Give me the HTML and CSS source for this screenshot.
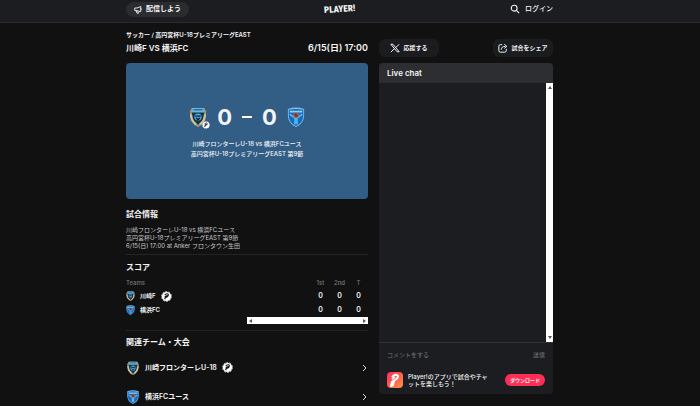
FILE: index.html
```html
<!DOCTYPE html>
<html lang="ja">
<head>
<meta charset="utf-8">
<title>川崎F VS 横浜FC | PLAYER!</title>
<link rel="stylesheet" href="styles.css">
</head>
<body>
<svg class="defs" aria-hidden="true">
  <symbol id="frontale" viewBox="0 0 20 22">
    <path d="M3 1h14l2 4-1 10-4 5-4 2-4-2-4-5L1 5z" fill="#a99b7c"/>
    <path d="M4 2h12l1 4-2 9-5 5-5-5-2-9z" fill="#173448"/>
    <path d="M4 1h12l1 5H3z" fill="#67b9e4"/>
    <path d="M5 3h10" stroke="#163d5c" stroke-width="1"/>
    <circle cx="10" cy="11" r="4" fill="#4da9d8"/>
    <path d="M7 10h6M8 12l2 2 2-2" stroke="#10212e" stroke-width="1.5" fill="none"/>
    <path d="M2 8c0 6 3 9 6 11M18 8c0 6-3 9-6 11" stroke="#d5c49d" stroke-width="2" fill="none"/>
  </symbol>
  <symbol id="yokohama" viewBox="0 0 20 22">
    <path d="M1 2q9-3 18 0v7q0 9-9 13Q1 18 1 9z" fill="#76bff0"/>
    <path d="M2 3q8-2 16 0v6q0 8-8 12-8-4-8-12z" fill="#1769ba"/>
    <path d="M3 4h14v2H3z" fill="#8fd0f5"/>
    <path d="M3 8l6 4v7M17 8l-6 4v7" stroke="#58b2ee" stroke-width="2" fill="none"/>
    <circle cx="10" cy="9" r="3" fill="#b65a3b"/>
    <path d="M8 8l4 2M10 7v4" stroke="#422e3d" stroke-width="1"/>
  </symbol>
  <symbol id="verified" viewBox="0 0 12 12">
    <circle cx="6" cy="6" r="5" fill="#fff"/>
    <circle cx="6" cy="6" r="5.300" fill="none" stroke="#fff" stroke-width="1" stroke-dasharray="2 1.300"/>
    <path d="M4 9l1-3M4 4q4-2 4 0t-3 3M4 6l3-1" stroke="#171719" stroke-width="1.300" fill="none"/>
  </symbol>
</svg>
<header class="topbar">
  <div class="container topbar-row">
    <button class="pill broadcast">
      <svg class="icon-small" viewBox="0 0 12 12" fill="none" stroke="currentColor" stroke-width="1.200"><path d="M1 4h3l5-2v7L4 7.500H1zM3 8l1 3h2L5 8M9 4.500q2 1 0 2"/></svg>配信しよう
    </button>
    <a class="logo" href="#">PLAYER!</a>
    <a class="login" href="#"><svg class="icon" viewBox="0 0 12 12" fill="none" stroke="currentColor" stroke-width="1.300"><circle cx="5" cy="5" r="3.500"/><path d="M8 8l3 3"/></svg>ログイン</a>
  </div>
</header>
<main class="container columns">
  <div class="match">
    <p class="crumbs">サッカー / 高円宮杯U-18プレミアリーグEAST</p>
    <div class="title-row"><h1>川崎F VS 横浜FC</h1><time>6/15(日) 17:00</time></div>
    <section class="board">
      <div class="score">
        <span class="crest"><svg class="crest-large"><use href="#frontale"/></svg><svg class="crest-badge"><use href="#verified"/></svg></span>
        <span class="points">0</span><span class="dash"></span><span class="points">0</span>
        <svg class="crest-large"><use href="#yokohama"/></svg>
      </div>
      <p>川崎フロンターレU-18 vs 横浜FCユース<br>高円宮杯U-18プレミアリーグEAST 第9節</p>
    </section>
    <section class="info">
      <h2>試合情報</h2>
      <p>川崎フロンターレU-18 vs 横浜FCユース<br>高円宮杯U-18プレミアリーグEAST 第9節<br>6/15(日) 17:00 at Anker フロンタウン生田</p>
    </section>
    <section class="scores">
      <h2>スコア</h2>
      <table>
        <thead><tr><th class="team-col">Teams</th><th>1st</th><th>2nd</th><th>T</th></tr></thead>
        <tbody>
          <tr><td class="team-col"><span class="team"><svg class="crest-tiny"><use href="#frontale"/></svg>川崎F<svg class="verified"><use href="#verified"/></svg></span></td><td>0</td><td>0</td><td>0</td></tr>
          <tr><td class="team-col"><span class="team"><svg class="crest-tiny"><use href="#yokohama"/></svg>横浜FC</span></td><td>0</td><td>0</td><td>0</td></tr>
        </tbody>
      </table>
      <div class="hscroll"><i class="arrow left"></i><i class="arrow right"></i></div>
    </section>
    <section class="related">
      <h2>関連チーム・大会</h2>
      <a class="related-row" href="#"><svg class="crest-small"><use href="#frontale"/></svg>川崎フロンターレU-18<svg class="verified"><use href="#verified"/></svg><svg class="chevron" viewBox="0 0 6 8"><path d="M1 1l3 3-3 3"/></svg></a>
      <a class="related-row" href="#"><svg class="crest-small"><use href="#yokohama"/></svg>横浜FCユース<svg class="chevron" viewBox="0 0 6 8"><path d="M1 1l3 3-3 3"/></svg></a>
    </section>
  </div>
  <aside class="side">
    <div class="actions">
      <button class="action cheer"><svg class="icon" viewBox="0 0 12 12" fill="none" stroke="currentColor"><path d="M1 1.500h2.500l7.500 9H8.500zM11 1.500L7 5.500M5 7l-4 4" stroke-width="1.200"/></svg>応援する</button>
      <button class="action share"><svg class="icon" viewBox="0 0 12 12" fill="none" stroke="currentColor" stroke-width="1.200"><path d="M5 2H3Q1 2 1 4v5q0 2 2 2h5q2 0 2-2V7M4 8q0-4 5-4M7.500 1.500L10.500 4 7.500 6.500"/></svg>試合をシェア</button>
    </div>
    <section class="chat">
      <h2>Live chat</h2>
      <div class="messages"><div class="vscroll"><i class="arrow up"></i><i class="arrow down"></i></div></div>
      <form class="compose"><input type="text" aria-label="コメント" placeholder="コメントをする"><button type="button">送信</button></form>
      <div class="promo">
        <svg class="app" viewBox="0 0 16 16"><defs><linearGradient id="glow" x1="0" y1="0" x2="1" y2="1"><stop offset="0" stop-color="#ff2862"/><stop offset="1" stop-color="#ff963f"/></linearGradient></defs><rect width="16" height="16" rx="4" fill="url(#glow)"/><path d="M5 5q4-4 6-1 0 3-5 5M5 7l3-2M5 10l2-1-1 4-2 1z" stroke="#fff" stroke-width="2" fill="none" stroke-linejoin="round"/></svg>
        <p>Player!のアプリで試合やチャットを楽しもう！</p>
        <a class="download" href="#">ダウンロード</a>
      </div>
    </section>
  </aside>
</main>
</body>
</html>
```
FILE: styles.css
```css
* { box-sizing: border-box; }
body {
  margin: 0;
  background: #111112;
  color: #f4f4f5;
  font-family: Inter, "Noto Sans CJK JP", sans-serif;
  font-size: 7px;
  line-height: 8px;
  overflow: hidden;
}
h1, h2, p { margin: 0; }
a { color: inherit; text-decoration: none; }
button, input { font: inherit; color: inherit; border: 0; margin: 0; padding: 0; background: none; }
svg { flex: none; display: block; }
.defs { position: absolute; width: 0; height: 0; }
.container { width: 61%; margin-left: 18%; }
.topbar { background: #1c1d20; border-bottom: 1px solid #292a2d; }
.topbar-row { display: grid; grid-template-columns: 1fr auto 1fr; align-items: center; height: 22px; padding-bottom: 4px; }
.pill { display: flex; align-items: center; gap: 3px; justify-self: start; height: 15px; padding: 0 8px; border-radius: 8px; background: #2b2c2f; font-weight: 700; }
.icon { width: 10px; height: 10px; }
.icon-small { width: 9px; height: 9px; }
.logo { font-family: "Roboto Condensed", Roboto, sans-serif; font-size: 9px; line-height: 14px; font-weight: 900; transform: rotate(-4deg); }
.login { display: flex; align-items: center; gap: 5px; justify-self: end; font-weight: 500; }
.columns { display: grid; grid-template-columns: 242fr 174fr; gap: 11px; align-items: start; }
.crumbs { margin-top: 8px; font-size: 6px; font-weight: 600; }
.title-row { display: flex; justify-content: space-between; align-items: center; margin-top: 3px; font-size: 9px; line-height: 12px; font-weight: 600; }
h1 { font-size: 8px; font-weight: 600; }
.board { margin-top: 9px; padding: 40px 0; border-radius: 4px; background: #325e85; text-align: center; }
.score { display: flex; justify-content: center; align-items: center; gap: 10px; height: 28px; }
.crest { position: relative; }
.crest-large { width: 18px; height: 20px; }
.crest-badge { position: absolute; right: -3px; bottom: -2px; width: 8px; height: 8px; }
.points { font-size: 22px; line-height: 28px; font-weight: 700; }
.dash { width: 10px; height: 2px; background: #fff; }
.board p { margin-top: 8px; font-size: 6px; line-height: 10px; font-weight: 500; }
h2 { font-size: 8px; line-height: 12px; font-weight: 700; }
.info { padding: 9px 0 4px; border-bottom: 1px solid #242426; }
.info p { margin-top: 6px; font-size: 6px; color: #c9c9cc; }
.scores { padding: 6px 0; border-bottom: 1px solid #242426; }
table { width: 100%; margin-top: 4px; border-collapse: collapse; table-layout: fixed; }
th, td { width: 19px; padding: 0; text-align: center; font-weight: 600; }
th { height: 12px; color: #77777b; font-weight: 500; font-size: 6px; }
td { height: 14px; }
.team-col { width: auto; text-align: left; }
.team { display: flex; align-items: center; gap: 5px; font-size: 6px; }
.crest-tiny { width: 9px; height: 10px; }
.verified { width: 11px; height: 11px; }
.hscroll { display: flex; justify-content: space-between; align-items: center; width: 50%; height: 7px; margin-left: auto; padding: 0 2px; background: #fff; }
.arrow { border: 2px solid transparent; }
.left { border-right: 3px solid #555; border-left-width: 0; }
.right { border-left: 3px solid #555; border-right-width: 0; }
.up { border-bottom: 3px solid #555; border-top-width: 0; }
.down { border-top: 3px solid #555; border-bottom-width: 0; }
.related { padding-top: 5px; }
.related-row { display: flex; align-items: center; gap: 5px; height: 29px; font-weight: 600; }
.related h2 + .related-row { margin-top: 5px; }
.crest-small { width: 14px; height: 14px; }
.chevron { width: 6px; height: 8px; margin-left: auto; fill: none; stroke: #ddd; }
.actions { display: flex; justify-content: space-between; margin-top: 16px; }
.action { display: flex; justify-content: center; align-items: center; gap: 3px; width: 60px; height: 18px; border-radius: 6px; background: #1b1c1f; font-size: 6px; font-weight: 700; white-space: nowrap; }
.chat { margin-top: 6px; border-radius: 4px; background: #1c1d20; overflow: hidden; }
.chat h2 { padding: 4px 8px; background: #2d2e31; font-weight: 600; }
.messages { display: flex; justify-content: flex-end; height: 260px; border-bottom: 1px solid #303134; }
.vscroll { display: flex; flex-direction: column; align-items: center; justify-content: space-between; width: 7px; padding: 3px 0; background: #fff; }
.compose { display: flex; height: 23px; padding: 0 8px; color: #737478; font-size: 6px; }
.compose input { flex: 1; min-width: 0; }
.compose input::placeholder { color: #737478; opacity: 1; }
.promo { display: flex; align-items: center; gap: 5px; padding: 6px 8px; }
.app { width: 16px; height: 16px; }
.promo p { flex: 1; max-width: 82px; font-size: 6px; line-height: 7px; font-weight: 500; }
.download { margin-left: auto; padding: 2px 5px; border-radius: 8px; background: #ff2e56; font-size: 5px; font-weight: 700; }
```
